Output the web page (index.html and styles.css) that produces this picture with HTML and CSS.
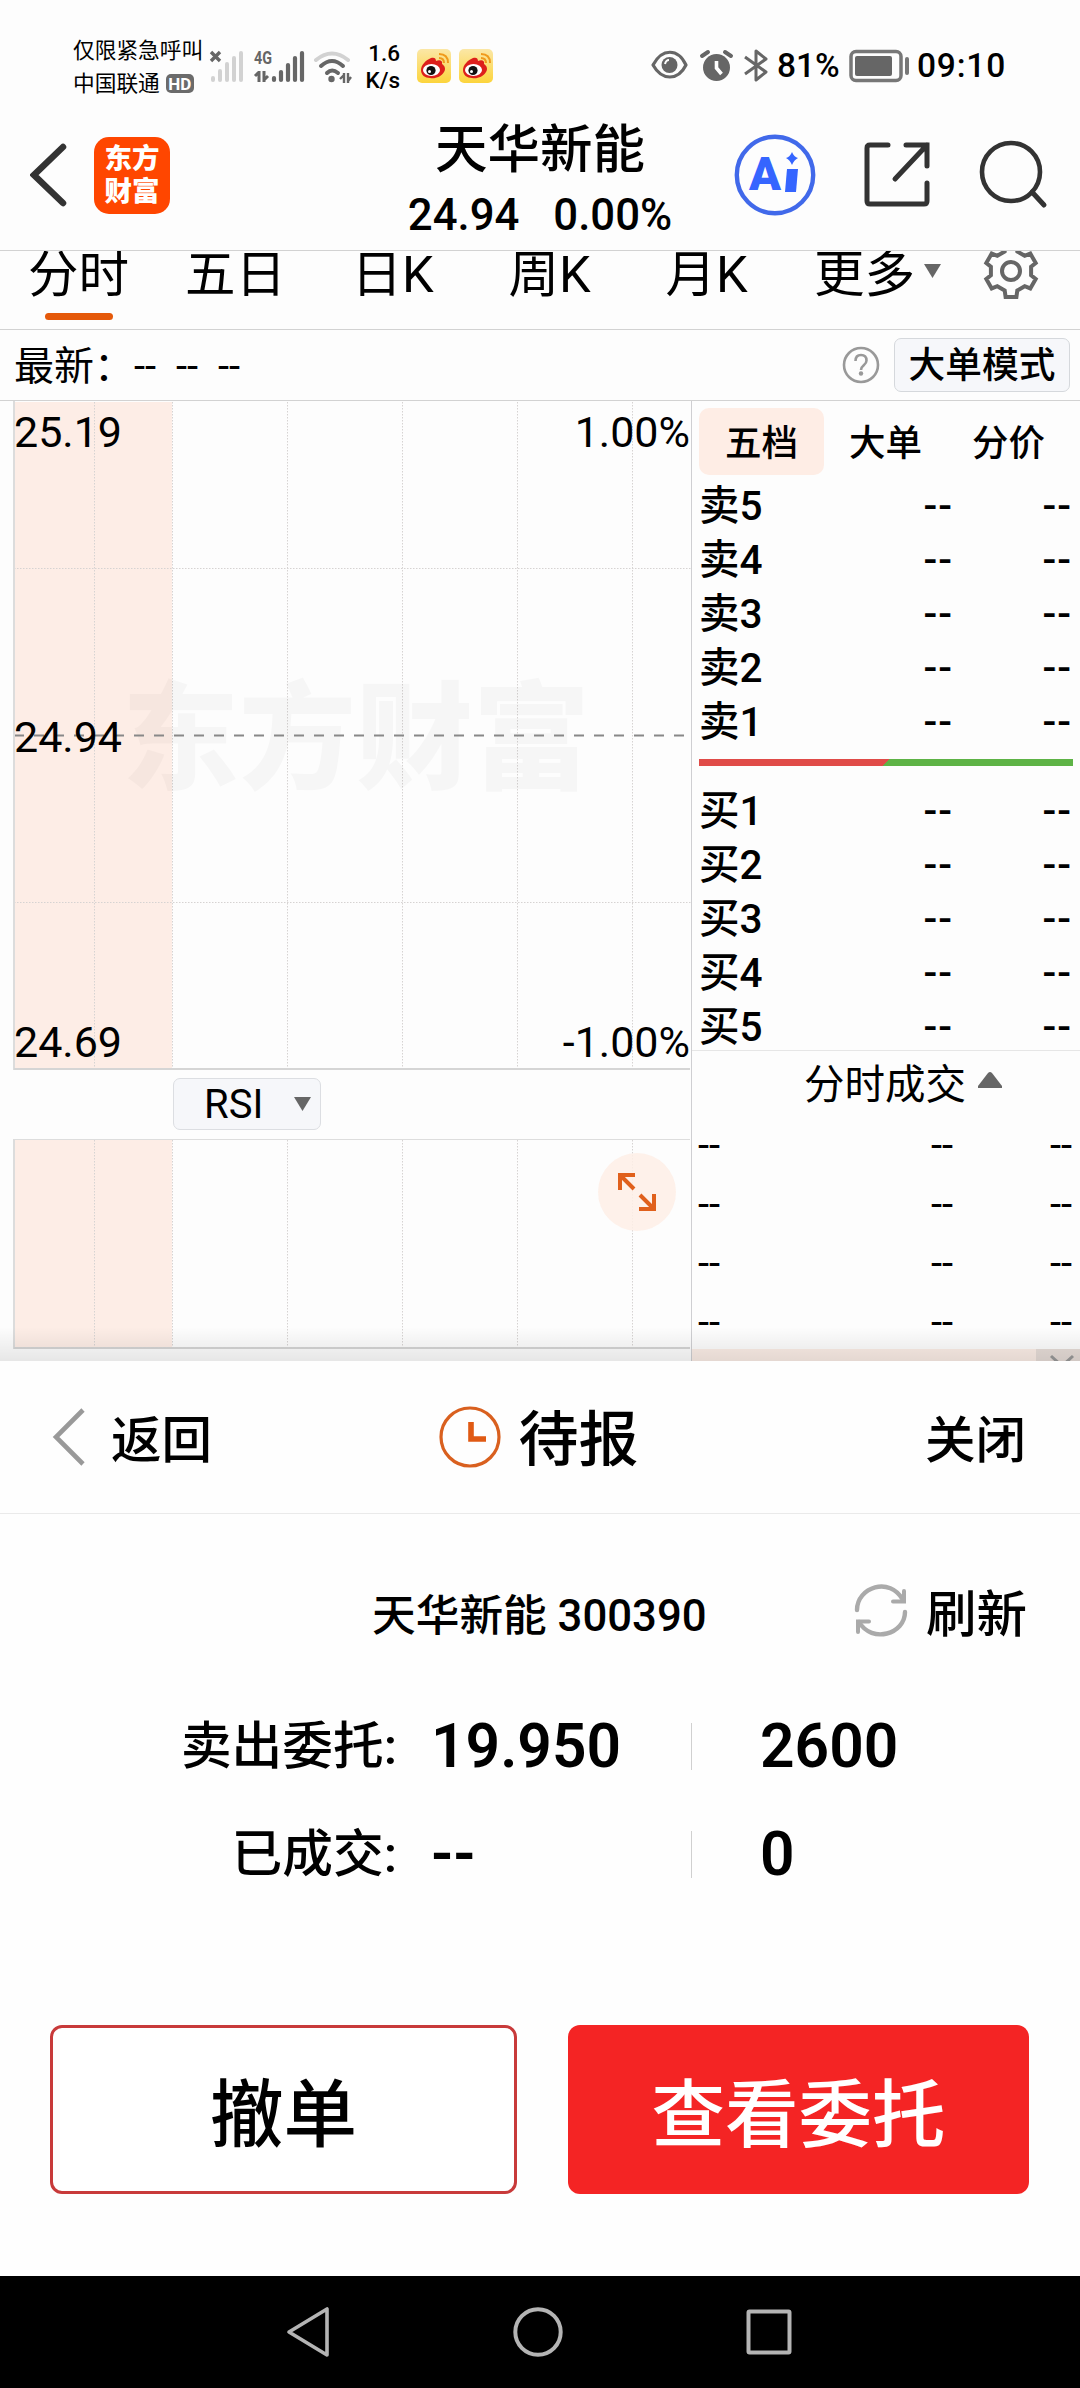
FILE: index.html
```
<!DOCTYPE html>
<html lang="zh-CN">
<head>
    <meta charset="UTF-8">
    <title>天华新能</title>
    <link rel="stylesheet" href="styles.css">
</head>
<body>
    <div class="market">
        <!-- 状态栏 -->
        <div class="status">
            <div class="carrier">
                <p>仅限紧急呼叫</p>
                <p>中国联通<span class="hd">HD</span></p>
            </div>
            <svg class="signals" width="146" height="36" viewBox="0 0 146 36">
                <path d="M2 4l9 9M11 4l-9 9" stroke="#666" stroke-width="3.4"/>
                <path d="M4 30v2M11 23v9M18 16v16M25 10v22M32 5v27" stroke="#d2d2d2" stroke-width="4" stroke-linecap="round"/>
                <text class="net" x="45" y="16" textLength="18" lengthAdjust="spacingAndGlyphs">4G</text>
                <path d="M50 23v11M46 28l4-4M55 23v11M55 32l4-4" stroke="#666" stroke-width="3" fill="none"/>
                <path d="M65 30v2M72 24v8M79 17v15M86 10v22M93 5v27" stroke="#666" stroke-width="4.2" stroke-linecap="round"/>
                <path d="M107 12q16-13 32 0" stroke="#d2d2d2" stroke-width="4" fill="none" stroke-linecap="round"/>
                <path d="M112 18q11-10 22 0M118 25q5-5 11 0" stroke="#666" stroke-width="4" fill="none" stroke-linecap="round"/>
                <circle cx="122.500" cy="31" r="3.200" fill="#666"/>
                <path d="M135 25v10M131 31l4-4M139 25v10M139 33l3-4" stroke="#666" stroke-width="2.400" fill="none"/>
            </svg>
            <div class="speed">1.6<br>K/s</div>
            <div class="apps">
                <svg width="34" height="34" viewBox="0 0 34 34">
                    <defs><linearGradient id="wb" x2="0" y2="1"><stop offset="0" stop-color="#fbe7a6"/><stop offset="1" stop-color="#fcd43c"/></linearGradient></defs>
                    <rect width="34" height="34" rx="5" fill="url(#wb)"/>
                    <path d="M4 21c0-5 5-10 10-12 3-1 5 0 5 3 4-2 7 0 6 3 3 2 4 5 2 8-3 5-9 7-14 6-5 0-9-3-9-8z" fill="#dd1f1b"/>
                    <ellipse cx="14.500" cy="21" rx="8.500" ry="6" fill="#fff"/>
                    <circle cx="14" cy="21.500" r="4.600" fill="#111"/>
                    <circle cx="12.500" cy="22.500" r="1.500" fill="#fff"/>
                    <path d="M22 9q5 0 5 5M22 5q9 0 9 9" stroke="#f09a1c" stroke-width="2" fill="none"/>
                </svg>
                <svg width="34" height="34" viewBox="0 0 34 34">
                    <rect width="34" height="34" rx="5" fill="url(#wb)"/>
                    <path d="M4 21c0-5 5-10 10-12 3-1 5 0 5 3 4-2 7 0 6 3 3 2 4 5 2 8-3 5-9 7-14 6-5 0-9-3-9-8z" fill="#dd1f1b"/>
                    <ellipse cx="14.500" cy="21" rx="8.500" ry="6" fill="#fff"/>
                    <circle cx="14" cy="21.500" r="4.600" fill="#111"/>
                    <circle cx="12.500" cy="22.500" r="1.500" fill="#fff"/>
                    <path d="M22 9q5 0 5 5M22 5q9 0 9 9" stroke="#f09a1c" stroke-width="2" fill="none"/>
                </svg>
            </div>
            <svg class="tools" width="118" height="34" viewBox="0 0 118 34">
                <path d="M2 16C11-1 27-1 35 16 27 32 11 32 2 16z" stroke="#666" stroke-width="3.200" fill="none" stroke-linejoin="round"/>
                <circle cx="18.500" cy="16" r="8" fill="#666"/>
                <path d="M14 15q1-4 4-4" stroke="#fff" stroke-width="2" fill="none"/>
                <circle cx="65.500" cy="18.500" r="13.500" fill="#666"/>
                <path d="M51 7l6-4M74 3l6 4" stroke="#666" stroke-width="4" stroke-linecap="round"/>
                <path d="M65.500 12v7l5 6" stroke="#fff" stroke-width="3.600" fill="none"/>
                <path d="M94 8l21 15-10 8V2l10 8-21 15" stroke="#666" stroke-width="3" fill="none" stroke-linejoin="round"/>
            </svg>
            <span class="percent">81%</span>
            <svg class="battery" width="62" height="34" viewBox="0 0 62 34">
                <rect x="2" y="2.500" width="50" height="29" rx="5" stroke="#777" stroke-width="3.500" fill="none"/>
                <rect x="6" y="7" width="37" height="20" rx="2" fill="#666"/>
                <rect x="56" y="8" width="4" height="18" rx="2" fill="#777"/>
            </svg>
            <span class="time">09:10</span>
        </div>

        <!-- 标题栏 -->
        <div class="header">
            <svg class="back" width="40" height="66" viewBox="0 0 40 66">
                <path d="M33 5L4 33l29 28" stroke="#333" stroke-width="6.500" fill="none" stroke-linecap="round"/>
            </svg>
            <div class="logo">东方<br>财富</div>
            <div class="stock">
                <h1>天华新能</h1>
                <p><span>24.94</span><span>0.00%</span></p>
            </div>
            <svg class="ai" width="82" height="82" viewBox="0 0 82 82">
                <circle cx="41" cy="41" r="38.200" stroke="#4169ea" stroke-width="4.400" fill="none"/>
                <text x="15" y="56" class="aitext">A</text>
                <path d="M53 35h11l-2 23H51z" fill="#3565ff"/>
                <path d="M58 18q2 5 6 6-4 2-6 7-2-5-6-7 4-1 6-6z" fill="#3565ff"/>
            </svg>
            <svg class="share" width="68" height="68" viewBox="0 0 68 68">
                <path d="M25 4H7q-3 0-3 3v53q0 3 3 3h54q3 0 3-3V42M43 4h21v21M64 4L32 38" stroke="#333" stroke-width="5" fill="none" stroke-linecap="round"/>
            </svg>
            <svg class="search" width="70" height="70" viewBox="0 0 70 70">
                <circle cx="32" cy="32" r="29" stroke="#333" stroke-width="4.600" fill="none"/>
                <path d="M53 52l12 13" stroke="#333" stroke-width="5" stroke-linecap="round"/>
            </svg>
        </div>

        <!-- 周期切换 -->
        <ul class="period">
            <li class="active">分时</li>
            <li>五日</li>
            <li>日K</li>
            <li>周K</li>
            <li>月K</li>
            <li class="more">更多<svg width="17" height="14" viewBox="0 0 17 14"><path d="M0 0h17L8.500 14z" fill="#666"/></svg></li>
            <li class="gear">
                <svg width="60" height="60" viewBox="-30 -30 60 60">
                    <path d="M6.300 19.500L5.400 26H-5.400L-6.300 19.500-13.700 15.200-19.300 17.400-24.700 8-20.100 4.300V-4.300L-24.700-8-19.300-17.400-13.700-15.200-6.300-19.500-5.400-26H5.400L6.300-19.500 13.700-15.200 19.300-17.400 24.700-8 20.100-4.300V4.300L24.700 8 19.300 17.400 13.700 15.200z" stroke="#666" stroke-width="4" fill="none"/>
                    <circle r="9" stroke="#666" stroke-width="4" fill="none"/>
                </svg>
            </li>
        </ul>

        <div class="latest">
            <span>最新：--&nbsp; --&nbsp; --</span>
            <svg width="38" height="38" viewBox="0 0 38 38">
                <circle cx="19" cy="19" r="17" stroke="#999" stroke-width="2.600" fill="none"/>
                <path d="M13.500 15q0-6 5.500-6t5.500 5.500c0 5-5.500 4.500-5.500 9.500" stroke="#999" stroke-width="2.600" fill="none"/>
                <circle cx="19" cy="27.500" r="2.200" fill="#999"/>
            </svg>
            <button>大单模式</button>
        </div>

        <div class="content">
            <div class="charts">
                <!-- 分时图 -->
                <div class="chart">
                    <svg class="grid" width="691" height="669" viewBox="0 0 691 669">
                        <rect x="15" y="1" width="157" height="667" fill="#fdede6"/>
                        <path d="M94.500 1v667M172.500 1v667M287.500 1v667M402.500 1v667M517.500 1v667M632.500 1v667M14 167.500h677M14 501.500h677" stroke="#d6d3d2" stroke-dasharray="1.500 1.500" fill="none"/>
                        <text class="watermark" x="122" y="379" textLength="468">东方财富</text>
                        <path d="M14 334.500h671" stroke="#888" stroke-width="2" stroke-dasharray="10 10"/>
                        <path d="M14 0v669" stroke="#dcdcdc" stroke-width="2"/>
                        <path d="M14 668h676" stroke="#d5d5d5" stroke-width="2"/>
                    </svg>
                    <p><span>25.19</span><span>1.00%</span></p>
                    <p><span>24.94</span></p>
                    <p><span>24.69</span><span>-1.00%</span></p>
                </div>
                <div class="indicator">
                    <button>RSI<svg width="17" height="14" viewBox="0 0 17 14"><path d="M0 0h17L8.500 14z" fill="#666"/></svg></button>
                </div>
                <!-- 副图 -->
                <div class="subchart">
                    <svg class="grid" width="691" height="222" viewBox="0 0 691 222">
                        <rect x="15" y="1" width="157" height="208" fill="#fdede6"/>
                        <path d="M94.500 1v208M172.500 1v208M287.500 1v208M402.500 1v208M517.500 1v208M632.500 1v208" stroke="#d6d3d2" stroke-dasharray="1.500 1.500" fill="none"/>
                        <path d="M14 .5h676" stroke="#ddd"/>
                        <path d="M14 0v210" stroke="#dcdcdc" stroke-width="2"/>
                        <path d="M14 209h676" stroke="#d5d5d5" stroke-width="2"/>
                    </svg>
                    <svg class="expand" width="78" height="78" viewBox="0 0 78 78">
                        <circle cx="39" cy="39" r="39" fill="#feefe6" fill-opacity=".85"/>
                        <path d="M22 37V22h15M22 22l14 14M41 56h15V41M56 56L42 42" stroke="#e0601c" stroke-width="4" fill="none"/>
                    </svg>
                </div>
            </div>

            <!-- 五档盘口 -->
            <div class="quote">
                <ul class="tabs">
                    <li class="active">五档</li>
                    <li>大单</li>
                    <li>分价</li>
                </ul>
                <ul class="level">
                    <li><b>卖5</b><i>--</i><i>--</i></li>
                    <li><b>卖4</b><i>--</i><i>--</i></li>
                    <li><b>卖3</b><i>--</i><i>--</i></li>
                    <li><b>卖2</b><i>--</i><i>--</i></li>
                    <li><b>卖1</b><i>--</i><i>--</i></li>
                </ul>
                <div class="ratio"></div>
                <ul class="level">
                    <li><b>买1</b><i>--</i><i>--</i></li>
                    <li><b>买2</b><i>--</i><i>--</i></li>
                    <li><b>买3</b><i>--</i><i>--</i></li>
                    <li><b>买4</b><i>--</i><i>--</i></li>
                    <li><b>买5</b><i>--</i><i>--</i></li>
                </ul>
                <div class="deal">分时成交<svg width="24" height="16" viewBox="0 0 24 16"><path d="M0 16v-2L10 1q2-2 4 0l10 13v2z" fill="#666"/></svg></div>
                <ul class="ticks">
                    <li><i>--</i><i>--</i><i>--</i></li>
                    <li><i>--</i><i>--</i><i>--</i></li>
                    <li><i>--</i><i>--</i><i>--</i></li>
                    <li><i>--</i><i>--</i><i>--</i></li>
                </ul>
                <div class="notice">
                    <span><svg width="26" height="24" viewBox="0 0 26 24"><path d="M2 2l22 20M24 2L2 22" stroke="#999" stroke-width="3"/></svg></span>
                </div>
            </div>
        </div>
    </div>

    <!-- 委托弹层 -->
    <div class="sheet">
        <div class="sheet-head">
            <a class="return"><svg width="34" height="60" viewBox="0 0 34 60"><path d="M32 3L5 30l27 27" stroke="#999" stroke-width="4.600" fill="none"/></svg>返回</a>
            <h2><svg width="62" height="62" viewBox="0 0 62 62"><circle cx="31" cy="31" r="29" stroke="#d9601f" stroke-width="3.200" fill="none"/><path d="M32 16v17h15" stroke="#e05a14" stroke-width="5.600" fill="none"/></svg>待报</h2>
            <a class="close">关闭</a>
        </div>
        <div class="name">
            <span>天华新能 300390</span>
            <a><svg width="56" height="56" viewBox="0 0 56 56"><path d="M4 27C4 4 37-7 50 17M52 29C52 51 19 61 6 39" stroke="#aaa" stroke-width="4.400" fill="none" stroke-linecap="round"/><path d="M51 8v10.500H40M5 49V38.500H16" stroke="#aaa" stroke-width="4" fill="none" stroke-linecap="round"/></svg>刷新</a>
        </div>
        <div class="order">
            <label>卖出委托:</label><strong>19.950</strong><strong>2600</strong>
            <label>已成交:</label><strong>--</strong><strong>0</strong>
        </div>
        <div class="btns">
            <button class="cancel">撤单</button>
            <button class="view">查看委托</button>
        </div>
    </div>

    <div class="nav">
        <svg width="44" height="52" viewBox="0 0 44 52"><path d="M41 3v46L3 26z" stroke="#b4b4b4" stroke-width="3.600" fill="none" stroke-linejoin="round"/></svg>
        <svg width="50" height="50" viewBox="0 0 50 50"><circle cx="25" cy="25" r="22.700" stroke="#b4b4b4" stroke-width="4" fill="none"/></svg>
        <svg width="46" height="46" viewBox="0 0 46 46"><rect x="2.500" y="2.500" width="41" height="41" rx="1" stroke="#b4b4b4" stroke-width="4" fill="none"/></svg>
    </div>
</body>
</html>
```
FILE: styles.css
```
* {
    margin: 0;
    padding: 0;
    box-sizing: border-box;
    list-style: none;
}
body {
    width: 1080px;
    background: #fdfdfd;
    color: #000;
    font-family: Roboto, "Noto Sans CJK SC", sans-serif;
}
svg {
    display: block;
    flex: none;
}
i {
    font-style: normal;
}
button {
    font-family: inherit;
    color: #000;
}
.market {
    position: relative;
    height: 1361px;
    overflow: hidden;
}
.market::after {
    content: "";
    position: absolute;
    left: 0;
    right: 0;
    bottom: 0;
    height: 34px;
    background: linear-gradient(rgba(0,0,0,0), rgba(0,0,0,0.09));
}

/* 状态栏 */
.status {
    display: flex;
    height: 115px;
    padding: 34px 0 0 73px;
}
.carrier {
    width: 135px;
    font-size: 21.7px;
    line-height: 32px;
    white-space: nowrap;
}
.carrier p {
    display: flex;
    align-items: center;
    height: 33px;
}
.hd {
    width: 28px;
    height: 19px;
    margin-left: 6px;
    border-radius: 5px;
    background: #6b6b6b;
    color: #fff;
    font-size: 17px;
    line-height: 20px;
    font-weight: 700;
    text-align: center;
}
.signals {
    margin: 14px 0 0 1px;
}
.net {
    font-size: 18px;
    font-weight: 700;
    fill: #666;
}
.speed {
    width: 45px;
    margin-top: 6px;
    font-size: 22.5px;
    font-weight: 500;
    line-height: 27px;
    text-align: right;
}
.apps {
    display: flex;
    gap: 8px;
    margin: 15px 0 0 17px;
}
.tools {
    margin: 15px 0 0 158px;
}
.percent, .time {
    margin-top: 12px;
    font-size: 33.5px;
    font-weight: 500;
    line-height: 40px;
}
.percent {
    width: 72px;
    margin-left: 8px;
}
.time {
    margin-left: 6px;
    letter-spacing: 0.8px;
}
.battery {
    margin-top: 15px;
}

/* 标题栏 */
.header {
    display: flex;
    height: 136px;
    padding-left: 30px;
    border-bottom: 1px solid #d2d2d2;
}
.back {
    margin-top: 27px;
}
.logo {
    width: 76px;
    height: 77px;
    margin: 22px 0 0 24px;
    padding-top: 5px;
    border-radius: 15px;
    background: #ff4600;
    color: #fff;
    font-size: 27.5px;
    font-weight: 900;
    line-height: 33px;
    text-align: center;
}
.stock {
    width: 340px;
    margin-left: 200px;
    text-align: center;
    white-space: nowrap;
}
.stock h1 {
    height: 69px;
    font-size: 52.5px;
    font-weight: 500;
    line-height: 71px;
}
.stock p {
    display: flex;
    justify-content: center;
    gap: 34px;
    font-size: 43.7px;
    font-weight: 500;
    line-height: 62px;
}
.ai {
    margin: 19px 0 0 24px;
}
.aitext {
    font-size: 47px;
    font-weight: 900;
    fill: #3565ff;
}
.share {
    margin: 26px 0 0 47px;
}
.search {
    margin: 25px 0 0 48px;
}

/* 周期切换 */
.period {
    display: grid;
    grid-template-columns: repeat(5, 157px) 185px 82px;
    height: 79px;
    overflow: hidden;
    border-bottom: 1px solid #d2d2d2;
    font-size: 50.5px;
    line-height: 47px;
    text-align: center;
}
.period .active::after {
    content: "";
    display: block;
    width: 68px;
    height: 7px;
    margin: 15px auto 0;
    border-radius: 4px;
    background: #e5590a;
}
.period .more {
    display: flex;
    justify-content: center;
    gap: 9px;
}
.period .more svg {
    margin-top: 13px;
}
.period .gear svg {
    margin: -10px auto 0;
}
.latest {
    display: flex;
    align-items: center;
    height: 71px;
    padding: 0 10px 0 14px;
    border-bottom: 1px solid #d2d2d2;
    font-size: 40px;
    white-space: pre;
}
.latest span {
    flex: 1;
    padding-bottom: 4px;
}
.latest button {
    width: 176px;
    height: 54px;
    padding-top: 2px;
    margin-left: 14px;
    border: 1px solid #d5d8dc;
    border-radius: 7px;
    background: #f6f7fa;
    font-size: 36.7px;
    font-weight: 500;
    line-height: 50px;
}

/* 图表 */
.content {
    display: flex;
    height: 960px;
}
.charts {
    width: 691px;
}
.chart, .subchart {
    position: relative;
}
.chart {
    display: flex;
    flex-direction: column;
    justify-content: space-between;
    height: 669px;
    padding: 6px 1px 3px 14px;
    font-size: 43px;
    line-height: 50px;
}
.grid {
    position: absolute;
    left: 0;
    top: 0;
}
.watermark {
    font-size: 117px;
    font-weight: 900;
    fill: rgba(0,0,0,0.028);
}
.chart p {
    display: flex;
    justify-content: space-between;
    position: relative;
}
.indicator {
    height: 69px;
    padding: 8px 0 0 173px;
}
.indicator button {
    display: flex;
    align-items: center;
    justify-content: space-between;
    width: 148px;
    height: 52px;
    padding: 0 9px 0 30px;
    border: 1px solid #dcdee2;
    border-radius: 7px;
    background: #f6f7fa;
    font-size: 40px;
}
.subchart {
    height: 222px;
}
.expand {
    position: absolute;
    left: 598px;
    top: 14px;
}

/* 盘口 */
.quote {
    display: flex;
    flex-direction: column;
    width: 389px;
    border-left: 1px solid #cfcfd2;
}
.tabs {
    display: flex;
    flex: none;
    height: 78px;
    padding: 7px 0 0 7px;
    font-size: 36.5px;
    font-weight: 500;
    line-height: 72px;
    text-align: center;
}
.tabs li {
    width: 123px;
    height: 67px;
}
.tabs .active {
    width: 125px;
    border-radius: 10px;
    background: #feede5;
}
.level {
    padding: 0 9px 0 7px;
    font-size: 40.5px;
    font-weight: 500;
    line-height: 54px;
}
.level li {
    display: grid;
    grid-template-columns: 133px 121px 119px;
    height: 54px;
    text-align: right;
}
.level b {
    font-weight: 500;
    text-align: left;
}
.level i {
    letter-spacing: 1px;
}
.ratio {
    flex: none;
    height: 7px;
    margin: 10px 7px 18px;
    background: linear-gradient(135deg, #e04b48 50%, #5eb346 50%);
}
.deal {
    display: flex;
    flex: none;
    height: 66px;
    margin-top: -4px;
    padding: 0 0 0 112px;
    gap: 12px;
    border-top: 1px solid #e6e6e6;
    font-size: 40.5px;
    line-height: 68px;
}
.deal svg {
    margin-top: 21px;
}
.ticks {
    flex: none;
    height: 233px;
    padding: 0 8px 0 6px;
    font-size: 40px;
    line-height: 59px;
}
.ticks li {
    display: grid;
    grid-template-columns: 40px 215px 119px;
    height: 59px;
    text-align: right;
}
.ticks i:first-child {
    text-align: left;
}
.notice {
    display: flex;
    justify-content: flex-end;
    flex: none;
    height: 14px;
    background: #fbede6;
}
.notice span {
    width: 44px;
    padding: 5px 0 0 13px;
    background: #e6dcd7;
}

/* 弹层 */
.sheet {
    height: 915px;
    background: #fefefe;
}
.sheet-head {
    display: grid;
    grid-template-columns: 1fr auto 1fr;
    align-items: center;
    height: 153px;
    padding: 8px 54px 0 51px;
    border-bottom: 1px solid #eaeaea;
    font-size: 50.5px;
    font-weight: 500;
}
.sheet-head a, .sheet-head h2 {
    display: flex;
    align-items: center;
    line-height: 70px;
}
.sheet-head svg {
    margin-bottom: 8px;
}
.return {
    gap: 26px;
}
.sheet-head h2 {
    gap: 18px;
    line-height: 74px;
    font-size: 60px;
    font-weight: 500;
}
.sheet-head .close {
    justify-content: flex-end;
}
.name {
    display: flex;
    align-items: center;
    justify-content: space-between;
    height: 188px;
    padding: 7px 53px 0 372px;
    font-size: 43.7px;
    font-weight: 500;
}
.name a {
    display: flex;
    align-items: center;
    gap: 17px;
    margin-bottom: 4px;
    font-size: 50.5px;
}
.name svg {
    margin-top: 2px;
}
.order {
    display: grid;
    grid-template-columns: 397px 295px 1fr;
    grid-auto-rows: 47px;
    row-gap: 61px;
    margin-top: 21px;
    line-height: 47px;
    text-align: right;
    font-size: 50.7px;
    font-weight: 500;
}
.order strong {
    padding-left: 34px;
    font-size: 60.5px;
    font-weight: 600;
    text-align: left;
}
.order strong:nth-child(3n+2) {
    border-right: 1px solid #d0d0d0;
}
.order strong:nth-child(3n) {
    padding-left: 68px;
}
.btns {
    display: flex;
    gap: 51px;
    padding: 147px 51px 0 50px;
}
.btns button {
    flex: 1;
    height: 169px;
    padding-bottom: 2px;
    border-radius: 12px;
    font-size: 73.5px;
    font-weight: 500;
}
.cancel {
    border: 3px solid #c83a3a;
    background: #fff;
}
.view {
    border: 0;
    background: #f42424;
}
.btns .view {
    color: #fff;
}

/* 系统导航 */
.nav {
    display: flex;
    align-items: center;
    justify-content: space-between;
    height: 112px;
    padding: 0 288px 0 286px;
    background: #000;
}
```
